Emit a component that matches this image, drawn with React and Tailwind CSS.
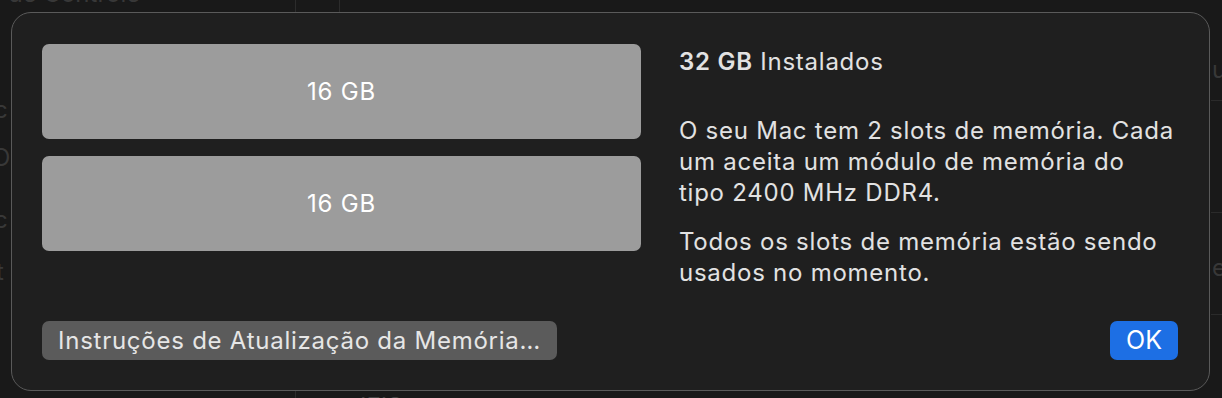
import React from 'react';

const font = { fontFamily: 'Inter, "Noto Sans", sans-serif' };

function Slot({ size }) {
  return (
    <div className="flex h-[95px] w-full items-center justify-center rounded-[7px] bg-[#9c9c9c] text-[24px] tracking-[0.75px] text-white">
      {size}
    </div>
  );
}

// window behind the sheet, only its edges peek out
function Backdrop() {
  return (
    <div className="pointer-events-none absolute inset-0 text-[24px] text-[#383838]">
      <div className="absolute left-[8px] top-[-24px]">de Controle</div>
      <div className="absolute left-[295px] top-0 h-[12px] w-px bg-[#2c2c2c]" />
      <div className="absolute left-[339px] top-0 h-[12px] w-px bg-[#2c2c2c]" />
      <div className="absolute bottom-0 left-[295px] h-[8px] w-px bg-[#2c2c2c]" />
      <div className="absolute left-[360px] top-[389px] text-[#444]">IEIS</div>
      <div className="absolute left-[-6px] top-[92px]">c</div>
      <div className="absolute left-[-8px] top-[140px]">O</div>
      <div className="absolute left-[-6px] top-[202px]">c</div>
      <div className="absolute left-[-4px] top-[254px]">t</div>
      <div className="absolute left-[1212px] top-[52px]">ua</div>
      <div className="absolute left-[1212px] top-[250px]">er</div>
      <div className="absolute left-[1211px] top-[100px] h-px w-[20px] bg-[#2a2a2a]" />
      <div className="absolute left-[1211px] top-[212px] h-px w-[20px] bg-[#2a2a2a]" />
      <div className="absolute left-[1211px] top-[314px] h-px w-[20px] bg-[#2a2a2a]" />
    </div>
  );
}

export default function App() {
  return (
    <div className="relative h-[398px] w-[1222px] overflow-hidden bg-[#191919]" style={font}>
      <Backdrop />
      <div className="relative pl-[11px] pt-[12px]">
        <div className="flex h-[379px] w-[1199px] flex-col rounded-[20px] border border-[#5a5a5a] bg-[#1f1f1f] pb-[30px] pl-[30px] pr-[31px] pt-[31px] text-[#e2e2e2]">
          <div className="flex">
            <div className="flex w-[599px] shrink-0 flex-col gap-[17px]">
              <Slot size="16 GB" />
              <Slot size="16 GB" />
            </div>
            <div className="ml-[38px] flex-1 whitespace-nowrap text-[24px] leading-[31px] tracking-[0.75px]">
              <p className="mt-[2px]">
                <span className="font-semibold">32 GB</span> Instalados
              </p>
              <p className="mt-[38px]">
                <span className="block">O seu Mac tem 2 slots de memória. Cada</span>
                <span className="block">um aceita um módulo de memória do</span>
                <span className="block">tipo 2400 MHz DDR4.</span>
              </p>
              <p className="mt-[18px]">
                <span className="block">Todos os slots de memória estão sendo</span>
                <span className="block">usados no momento.</span>
              </p>
            </div>
          </div>
          <div className="mt-auto flex items-center justify-between">
            <button className="h-[39px] rounded-[7px] bg-[#5b5b5b] px-[16px] text-[24px] tracking-[0.75px] text-[#e6e6e6]">
              Instruções de Atualização da Memória…
            </button>
            <button className="h-[39px] w-[68px] rounded-[7px] bg-[#1d6fe4] text-[25px] text-white">
              OK
            </button>
          </div>
        </div>
      </div>
    </div>
  );
}
